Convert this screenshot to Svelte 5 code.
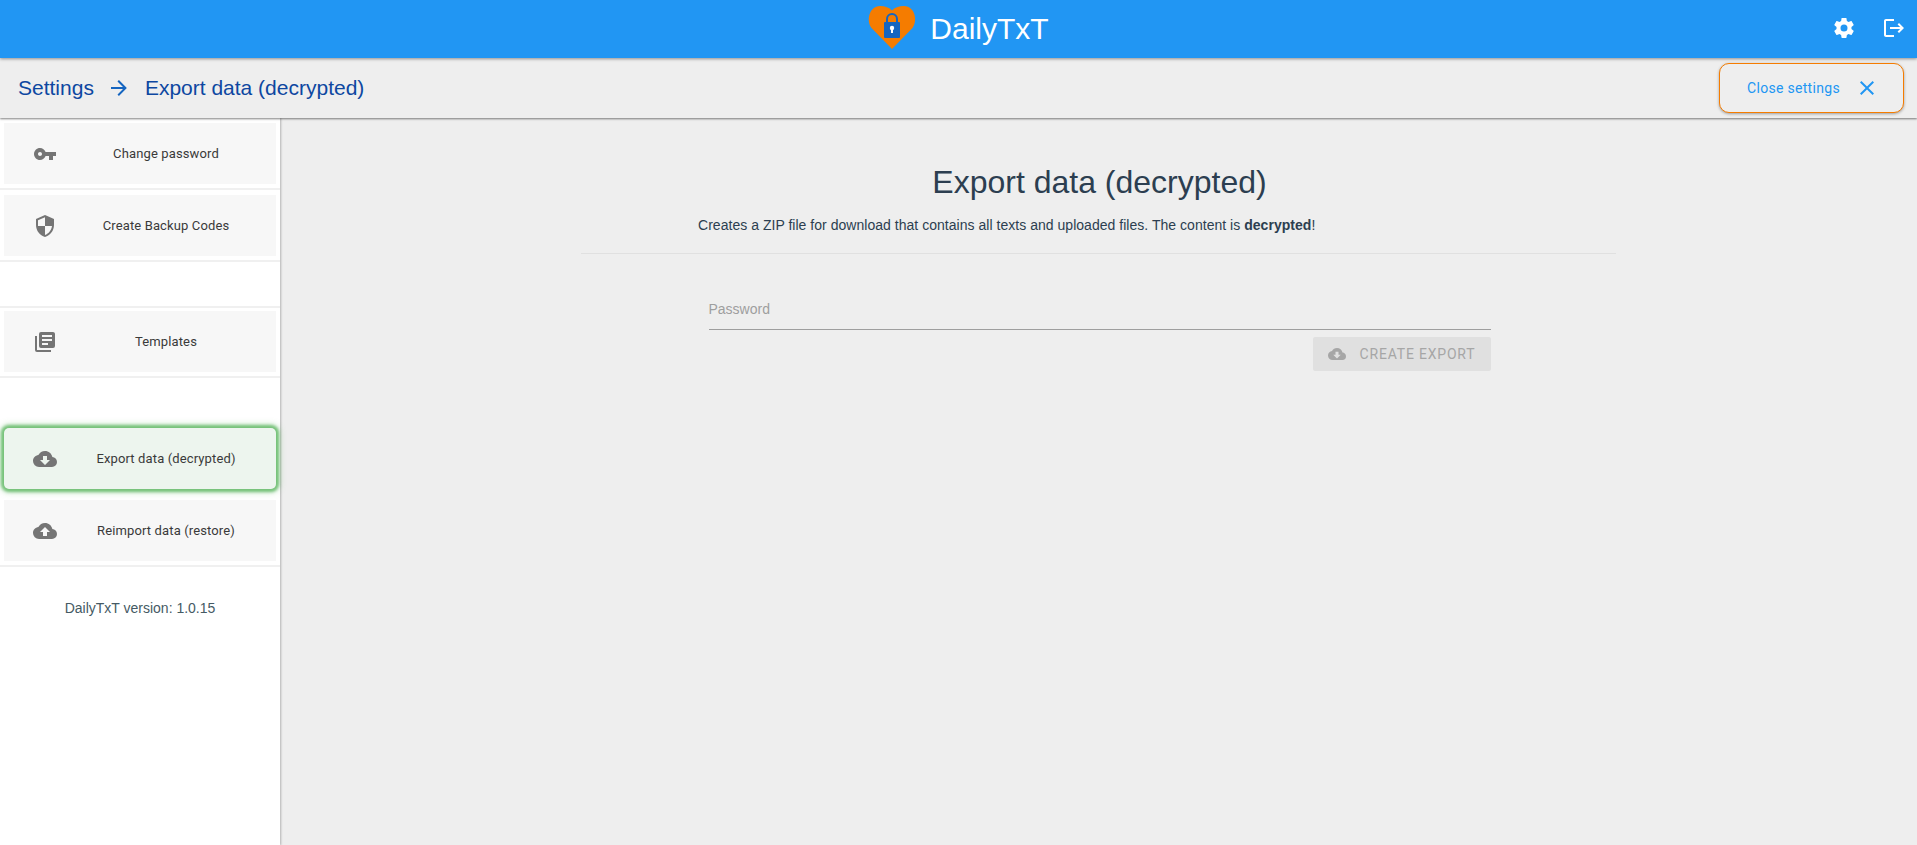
<script>
	const ICONS = {
		key: 'M7 14C5.9 14 5 13.1 5 12S5.9 10 7 10 9 10.9 9 12 8.1 14 7 14M12.6 10C11.8 7.7 9.6 6 7 6C3.7 6 1 8.7 1 12S3.7 18 7 18C9.6 18 11.8 16.3 12.6 14H16V18H20V14H23V10H12.6Z',
		shield: 'M12,12H19C18.47,16.11 15.72,19.78 12,20.92V12H5V6.3L12,3.19M12,1L3,5V11C3,16.55 6.84,21.73 12,23C17.16,21.73 21,16.55 21,11V5L12,1Z',
		books: 'M19,7H9V5H19M15,15H9V13H15M19,11H9V9H19M20,2H8A2,2 0 0,0 6,4V16A2,2 0 0,0 8,18H20A2,2 0 0,0 22,16V4C22,2.89 21.1,2 20,2M4,6H2V20A2,2 0 0,0 4,22H18V20H4V6Z',
		download: 'M17,13L12,18L7,13H10V9H14V13M19.35,10.03C18.67,6.59 15.64,4 12,4C9.11,4 6.6,5.64 5.35,8.03C2.34,8.36 0,10.9 0,14A6,6 0 0,0 6,20H19A5,5 0 0,0 24,15C24,12.36 21.95,10.22 19.35,10.03Z',
		upload: 'M14,13V17H10V13H7L12,8L17,13M19.35,10.03C18.67,6.59 15.64,4 12,4C9.11,4 6.6,5.64 5.35,8.03C2.34,8.36 0,10.9 0,14A6,6 0 0,0 6,20H19A5,5 0 0,0 24,15C24,12.36 21.95,10.22 19.35,10.03Z',
		cog: 'M12,15.5A3.5,3.5 0 0,1 8.5,12A3.5,3.5 0 0,1 12,8.5A3.5,3.5 0 0,1 15.5,12A3.5,3.5 0 0,1 12,15.5M19.43,12.97C19.47,12.65 19.5,12.33 19.5,12C19.5,11.67 19.47,11.34 19.43,11L21.54,9.37C21.73,9.22 21.78,8.95 21.66,8.73L19.66,5.27C19.54,5.05 19.27,4.96 19.05,5.05L16.56,6.05C16.04,5.66 15.5,5.32 14.87,5.07L14.5,2.42C14.46,2.18 14.25,2 14,2H10C9.75,2 9.54,2.18 9.5,2.42L9.13,5.07C8.5,5.32 7.96,5.66 7.44,6.05L4.95,5.05C4.73,4.96 4.46,5.05 4.34,5.27L2.34,8.73C2.21,8.95 2.27,9.22 2.46,9.37L4.57,11C4.53,11.34 4.5,11.67 4.5,12C4.5,12.33 4.53,12.65 4.57,12.97L2.46,14.63C2.27,14.78 2.21,15.05 2.34,15.27L4.34,18.73C4.46,18.95 4.73,19.03 4.95,18.95L7.44,17.94C7.96,18.34 8.5,18.68 9.13,18.93L9.5,21.58C9.54,21.82 9.75,22 10,22H14C14.25,22 14.46,21.82 14.5,21.58L14.87,18.93C15.5,18.67 16.04,18.34 16.56,17.94L19.05,18.95C19.27,19.03 19.54,18.95 19.66,18.73L21.66,15.27C21.78,15.05 21.73,14.78 21.54,14.63L19.43,12.97Z',
		logout: 'M17 7L15.59 8.41L18.17 11H8V13H18.17L15.59 15.58L17 17L22 12M4 5H12V3H4C2.9 3 2 3.9 2 5V19C2 20.1 2.9 21 4 21H12V19H4V5Z',
		arrow: 'M4,11V13H16L10.5,18.5L11.92,19.92L19.84,12L11.92,4.08L10.5,5.5L16,11H4Z',
		close: 'M19,6.41L17.59,5L12,10.59L6.41,5L5,6.41L10.59,12L5,17.59L6.41,19L12,13.41L17.59,19L19,17.59L13.41,12L19,6.41Z'
	};

	const groups = [
		[
			{ icon: 'key', label: 'Change password' },
			{ icon: 'shield', label: 'Create Backup Codes' }
		],
		[{ icon: 'books', label: 'Templates' }],
		[
			{ icon: 'download', label: 'Export data (decrypted)', active: true },
			{ icon: 'upload', label: 'Reimport data (restore)' }
		]
	];
</script>

{#snippet icon(name, size)}
	<svg class="icon" width={size} height={size} viewBox="0 0 24 24" fill="currentColor">
		<path d={ICONS[name]} />
	</svg>
{/snippet}

<div class="app">
	<header class="toolbar">
		<div class="brand">
			<svg class="logo" width="48" height="48" viewBox="0 0 48 48">
				<path
					d="M24 44 L3.500 23 C-2 16 1 1 12 1 C17 1 21.500 2.500 24 5.500 C26.500 2.500 31 1 36 1 C47 1 50 16 44.500 23 Z"
					fill="#f57c00"
				/>
				<path d="M18 18 V14 A6 6 0 0 1 30 14 V18 H28 V14 A4 4 0 0 0 20 14 V18 Z" fill="#1565c0" />
				<rect x="16" y="17" width="16" height="16" rx="1" fill="#1565c0" />
				<circle cx="24" cy="23" r="2.200" fill="#fff" />
				<rect x="23" y="23" width="2" height="5" fill="#fff" />
			</svg>
			<span class="brand-name">DailyTxT</span>
		</div>
		<div class="actions">
			{@render icon('cog', 24)}
			{@render icon('logout', 24)}
		</div>
	</header>

	<div class="subheader">
		<div class="crumbs">
			<span>Settings</span>
			{@render icon('arrow', 24)}
			<span>Export data (decrypted)</span>
		</div>
		<button class="close-btn">
			<span>Close settings</span>
			{@render icon('close', 24)}
		</button>
	</div>

	<div class="body">
		<aside class="sidebar">
			{#each groups as group}
				<div class="group">
					{#each group as item}
						<div class="item" class:active={item.active}>
							<span class="item-icon">{@render icon(item.icon, 24)}</span>
							<span class="item-label">{item.label}</span>
						</div>
					{/each}
				</div>
			{/each}
			<p class="version">DailyTxT version: 1.0.15</p>
		</aside>

		<main class="content">
			<section class="panel">
				<h1>Export data (decrypted)</h1>
				<p class="desc">
					Creates a ZIP file for download that contains all texts and uploaded files. The content is
					<strong>decrypted</strong>!
				</p>
				<hr />
				<div class="form">
					<div class="field">Password</div>
					<button class="export-btn" disabled>
						{@render icon('download', 18)}
						<span>CREATE EXPORT</span>
					</button>
				</div>
			</section>
		</main>
	</div>
</div>

<style>
	:global(body) {
		margin: 0;
		font-family: 'Liberation Sans', Arial, sans-serif;
		background: #eee;
		overflow: hidden;
	}

	.app {
		height: 845px;
		display: flex;
		flex-direction: column;
	}

	.icon {
		display: block;
		flex: none;
	}

	.toolbar {
		position: relative;
		z-index: 3;
		height: 58px;
		flex: none;
		background: #2196f3;
		color: #fff;
		display: flex;
		align-items: center;
		justify-content: center;
		box-shadow: 0 1px 3px rgba(0, 0, 0, 0.4);
	}

	.brand {
		display: flex;
		align-items: center;
		gap: 14px;
	}

	.logo {
		overflow: visible;
	}

	.brand-name {
		font-size: 30px;
	}

	.actions {
		position: absolute;
		right: 11px;
		top: 16px;
		display: flex;
		gap: 26px;
	}

	.subheader {
		position: relative;
		z-index: 2;
		height: 60px;
		flex: none;
		display: flex;
		align-items: center;
		justify-content: space-between;
		padding: 0 13px 0 18px;
		background: #eee;
		box-shadow: 0 1px 2px rgba(0, 0, 0, 0.5);
	}

	.crumbs {
		display: flex;
		align-items: center;
		gap: 13.500px;
		font-size: 21px;
		color: #0d47a1;
	}

	.crumbs .icon {
		color: #1565c0;
	}

	.close-btn {
		width: 185px;
		height: 50px;
		box-sizing: border-box;
		display: flex;
		align-items: center;
		justify-content: center;
		gap: 15px;
		padding: 0 0 0 3px;
		background: #eee;
		border: 1px solid #f57c00;
		border-radius: 10px;
		box-shadow: 0 1px 3px rgba(0, 0, 0, 0.35);
		color: #2196f3;
		font-family: Roboto, sans-serif;
		font-size: 14px;
		letter-spacing: 0.3px;
	}

	.body {
		flex: 1;
		display: flex;
		min-height: 0;
	}

	.sidebar {
		position: relative;
		z-index: 1;
		width: 280px;
		flex: none;
		background: #fff;
		box-shadow: 1px 0 2px rgba(0, 0, 0, 0.25);
		padding-top: 5px;
		box-sizing: border-box;
	}

	.group:nth-child(1) {
		margin-bottom: 55px;
	}

	.group:nth-child(2) {
		margin-bottom: 56px;
	}

	.group:nth-child(3) {
		margin-bottom: 39px;
	}

	.item {
		height: 61px;
		margin: 0 4px 11px;
		display: flex;
		align-items: center;
		background: #f7f7f7;
		color: #3a3a3a;
		font-family: Roboto, sans-serif;
		font-size: 13px;
		letter-spacing: 0.13px;
		position: relative;
	}

	.item::after {
		content: '';
		position: absolute;
		left: -4px;
		right: -4px;
		bottom: -6px;
		height: 2px;
		background: #f0f0f0;
	}

	.group:nth-child(2) .item::before {
		content: '';
		position: absolute;
		left: -4px;
		right: -4px;
		top: -5px;
		height: 2px;
		background: #f0f0f0;
	}

	.item.active {
		background: #edf5ee;
		border-radius: 5px;
		box-shadow: 0 0 3px 3px rgba(102, 187, 106, 0.85), 0 0 7px 3px rgba(76, 175, 80, 0.35);
	}

	.item.active::after {
		display: none;
	}

	.item-icon {
		width: 82px;
		display: flex;
		justify-content: center;
		color: #757575;
	}

	.item-label {
		flex: 1;
		text-align: center;
		padding-right: 30px;
	}

	.version {
		margin: 0;
		text-align: center;
		font-size: 14px;
		color: #455a64;
	}

	.content {
		flex: 1;
		background: #eee;
		display: flex;
		justify-content: center;
	}

	.panel {
		width: 1035px;
		color: #2c3e50;
		text-align: center;
	}

	h1 {
		margin: 44px 0 0;
		padding-left: 2px;
		font-size: 32px;
		font-weight: 400;
		line-height: 40px;
	}

	.desc {
		margin: 13px 0 0;
		font-size: 14px;
		letter-spacing: 0.03px;
		line-height: 20px;
		text-align: left;
		padding-left: 117px;
	}

	hr {
		margin: 18px 0 0;
		border: 0;
		border-top: 1px solid #e0e0e0;
	}

	.form {
		width: 782px;
		margin: 0 auto;
		padding-top: 47px;
		position: relative;
		left: 1px;
		display: flex;
		flex-direction: column;
		align-items: flex-end;
	}

	.field {
		width: 100%;
		box-sizing: border-box;
		height: 29px;
		text-align: left;
		font-size: 14px;
		color: #9e9e9e;
		border-bottom: 1px solid #9e9e9e;
	}

	.export-btn {
		margin-top: 7px;
		width: 178px;
		height: 34px;
		display: flex;
		align-items: center;
		justify-content: center;
		gap: 14px;
		background: #e0e0e0;
		border: 0;
		border-radius: 2px;
		color: #a6a6a6;
		font-family: Roboto, sans-serif;
		font-size: 14px;
		letter-spacing: 0.8px;
	}
</style>
